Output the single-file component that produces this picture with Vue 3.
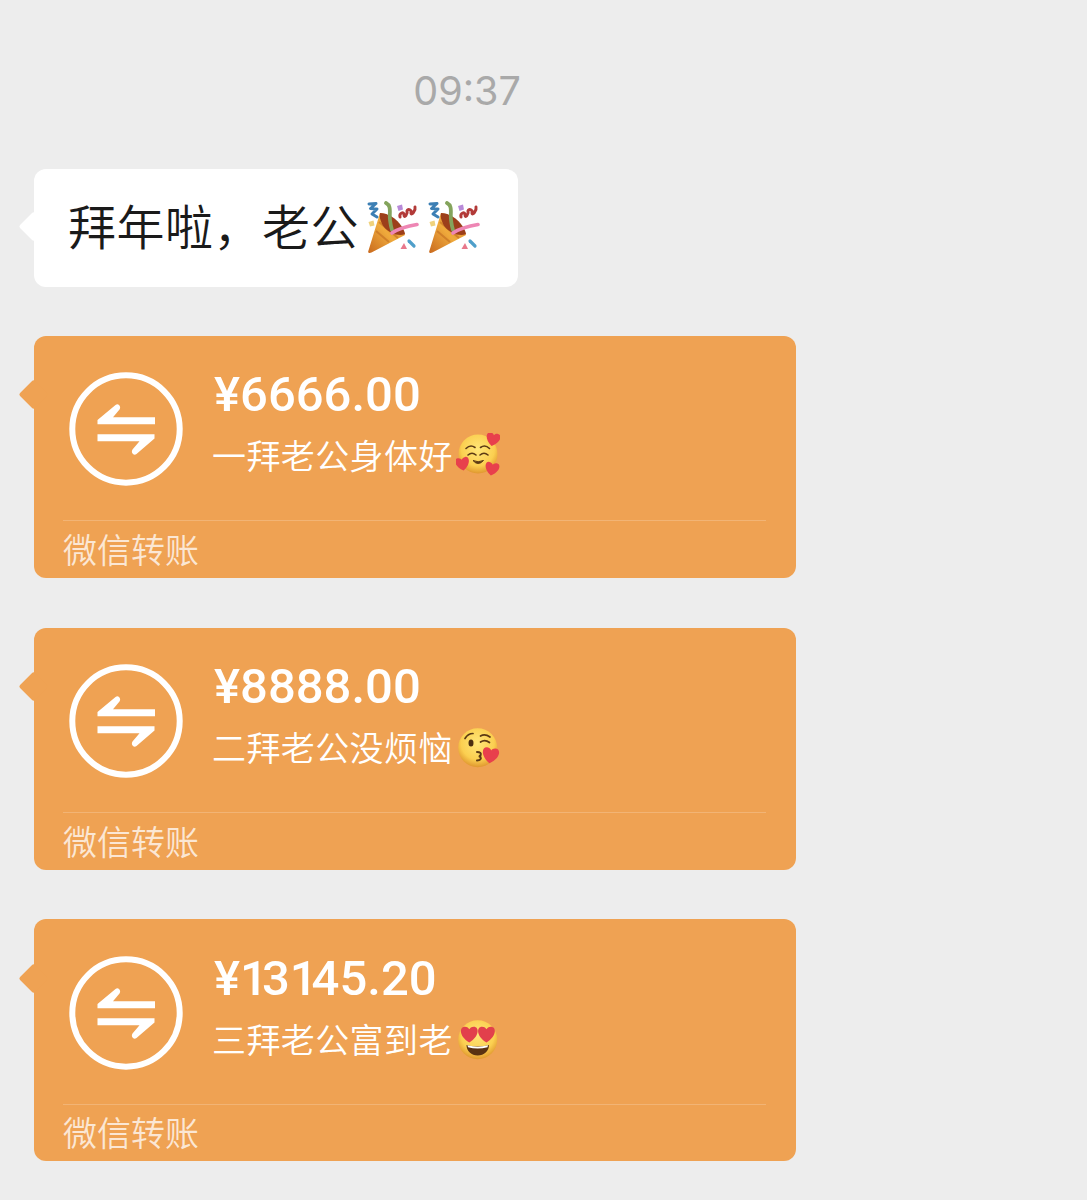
<script setup>
const cards = [
  { amount: '¥6666.00', note: '一拜老公身体好', emoji: 'hearts' },
  { amount: '¥8888.00', note: '二拜老公没烦恼', emoji: 'kiss' },
  { amount: '¥13145.20', note: '三拜老公富到老', emoji: 'love' }
]
const heart = 'M0 4.6C-6.2 .6-5.6-4.5-2.6-4.5C-1.2-4.5-.3-3.7 0-3C.3-3.7 1.2-4.5 2.6-4.5C5.6-4.5 6.2 .6 0 4.6Z'
</script>

<template>
  <main class="page">
    <div class="time">09:37</div>

    <div class="bubble">
      <span class="bubble-text">拜年啦，老公</span>
      <svg v-for="n in 2" :key="n" class="popper" viewBox="0 0 52 52">
        <defs>
          <linearGradient id="cone" x1="0" y1="1" x2="1" y2="0">
            <stop offset="0" stop-color="#c96a1e" />
            <stop offset=".5" stop-color="#efaa3c" />
            <stop offset="1" stop-color="#d9862a" />
          </linearGradient>
        </defs>
        <path d="M1.500 49.500C.5 51.500 2 52.500 4.500 51.500L38 34C36 24 24 13 13 12Z" fill="url(#cone)" />
        <path d="M9 30L22 41M12 21L31 37" stroke="#b9621c" stroke-width="2" fill="none" opacity=".5" />
        <path d="M13 12C24 12 36 23 38 33C32 36 22 32 17 26C14 22 12 16 13 12Z" fill="#9c3f1a" />
        <path d="M19 2C25 5 22 12 23 19C23.500 23 24 26 25 29" stroke="#84a45c" stroke-width="3.800" fill="none" stroke-linecap="round" />
        <path d="M25 32C31 28 40 25 50 23.500" stroke="#ee86b4" stroke-width="3.600" fill="none" stroke-linecap="round" />
        <path d="M2 3L9 2.500L3.500 7.500L10 8L5 13L10 16" stroke="#3c7fb4" stroke-width="3" fill="none" stroke-linejoin="round" stroke-linecap="round" />
        <path d="M33 16C32 12 37 10 37 14C37 18 41 13 40 10C41 7 45 9 44 12C44 15 49 10 48 6" stroke="#b23a38" stroke-width="3" fill="none" stroke-linecap="round" />
        <path d="M30 5L35 3.500L36 8.500L31.500 10Z" fill="#b88ad8" />
        <path d="M1.500 21L6.500 19.500L7.500 24.500L3 25.500Z" fill="#f0d27c" />
        <path d="M42 40L47 45" stroke="#4f9fca" stroke-width="3.200" stroke-linecap="round" />
        <path d="M33.500 48L37 42L40 48Z" fill="#e8788c" />
      </svg>
    </div>

    <section v-for="card in cards" :key="card.amount" class="card">
      <div class="card-main">
        <svg class="transfer" viewBox="0 0 114 114">
          <circle cx="57" cy="57" r="53.700" fill="none" stroke="#fff" stroke-width="6" />
          <path d="M28.500 52.300H86V45.300H44L50.500 37.500Q52 35 50 33Q48.500 31.500 46.500 33L28.500 48Z" fill="#fff" />
          <path d="M85.500 62.300H28.500V69.300H70.500L63.500 77.500Q62 80 64 82Q65.500 83.500 67.500 82L85.500 66.500Z" fill="#fff" />
        </svg>
        <div class="info">
          <div class="amount"><span v-for="(ch, i) in card.amount" :key="i" :class="{ narrow: ch === '1' }">{{ ch }}</span></div>
          <div class="note">
            <span class="note-text">{{ card.note }}</span>
            <svg class="face" viewBox="0 0 44 44">
              <defs>
                <radialGradient :id="'skin-' + card.emoji" cx=".5" cy=".38" r=".65">
                  <stop offset="0" stop-color="#ffe678" />
                  <stop offset=".65" stop-color="#fbcf50" />
                  <stop offset="1" stop-color="#dc8f2a" />
                </radialGradient>
              </defs>
              <template v-if="card.emoji === 'hearts'">
                <circle cx="22" cy="21" r="19.500" :fill="'url(#skin-' + card.emoji + ')'" />
                <g fill="none" stroke="#5c3a14" stroke-width="1.600" stroke-linecap="round">
                  <path d="M10 15.500Q14.500 11 19 14.500" />
                  <path d="M24.500 14.500Q29 11 33.500 15.500" />
                  <path d="M12 22Q16 18.500 20 22" />
                  <path d="M24 22Q28 18.500 32 22" />
                </g>
                <path d="M17 27.500Q22 33.500 27.500 27.500Q22 30 17 27.500Z" fill="#5c3a14" stroke="#5c3a14" stroke-width="1" stroke-linejoin="round" />
                <path :d="heart" fill="#e8404c" transform="translate(37 6.500) rotate(12) scale(1.450)" />
                <path :d="heart" fill="#e8404c" transform="translate(6.500 31) rotate(-10) scale(1.450)" />
                <path :d="heart" fill="#e8404c" transform="translate(36 36) rotate(10) scale(1.450)" />
              </template>
              <template v-else-if="card.emoji === 'kiss'">
                <circle cx="21.700" cy="22.700" r="19.500" :fill="'url(#skin-' + card.emoji + ')'" />
                <g fill="none" stroke="#5c3a14" stroke-width="1.700" stroke-linecap="round" stroke-linejoin="round">
                  <path d="M9 13.500Q12 8.500 17 8.500" />
                  <path d="M24.500 11Q29 8.500 34 12" />
                  <path d="M24.500 17Q29 14 33.500 17.500" />
                  <path d="M21 27Q26 27 24.500 30.500Q22.500 31.500 24.500 32Q26 35 21 35.500" stroke-width="2" />
                </g>
                <ellipse cx="15" cy="18" rx="2.500" ry="3.500" fill="#4a2e10" />
                <path :d="heart" fill="#e8404c" transform="translate(34.500 30.500) rotate(8) scale(1.700)" />
              </template>
              <template v-else>
                <circle cx="21.700" cy="22.700" r="19.500" :fill="'url(#skin-' + card.emoji + ')'" />
                <path d="M10.500 28Q21.700 31 33 28C33 34 28 38.500 21.700 38.500C15.500 38.500 10.500 34 10.500 28Z" fill="#5a3212" />
                <path d="M11.500 28.300Q21.700 31 32 28.300L31.500 30.300Q21.700 32.700 12 30.300Z" fill="#fff" />
                <path :d="heart" fill="#e2404c" transform="translate(13.300 17.500) scale(1.750)" />
                <path :d="heart" fill="#e2404c" transform="translate(30.500 17.500) scale(1.750)" />
              </template>
            </svg>
          </div>
        </div>
      </div>
      <footer class="card-foot">微信转账</footer>
    </section>
  </main>
</template>

<style scoped>
.page {
  box-sizing: border-box;
  width: 1087px;
  height: 1200px;
  padding: 65px 0 0 34px;
  overflow: hidden;
  background: #ededed;
  font-family: "Noto Sans CJK SC", "Noto Sans", sans-serif;
}
.time {
  width: 866px;
  margin-bottom: 52px;
  font-family: Inter, "Liberation Sans", sans-serif;
  font-size: 39.5px;
  line-height: 52px;
  text-align: center;
  color: #a9a9a9;
}
.bubble {
  position: relative;
  display: flex;
  align-items: center;
  gap: 9px;
  box-sizing: border-box;
  width: 484px;
  height: 118px;
  margin-bottom: 49px;
  padding-left: 34px;
  border-radius: 12px;
  background: #fff;
}
.bubble::before,
.card::before {
  content: "";
  position: absolute;
  left: -11.5px;
  top: 47px;
  width: 21px;
  height: 21px;
  border-radius: 2px;
  background: inherit;
  transform: rotate(45deg);
}
.bubble-text {
  font-size: 48px;
  font-weight: 350;
  line-height: 60px;
  letter-spacing: 0.5px;
  color: #1a1a1a;
  margin-right: -1px;
  margin-bottom: 8px;
}
.popper {
  flex: none;
  width: 52px;
  height: 52px;
  margin-bottom: 3px;
}
.card {
  position: relative;
  width: 762px;
  height: 242px;
  margin-bottom: 50px;
  border-radius: 12px;
  background: #efa253;
  color: #fff;
}
.card:last-child {
  margin-top: -1px;
}
.card::before {
  top: 47.5px;
}
.card:last-child::before {
  top: 48.5px;
}
.card-main {
  display: flex;
  gap: 29px;
  box-sizing: border-box;
  height: 184px;
  padding: 36px 0 0 35px;
}
.card:last-child .card-main {
  height: 185px;
  padding-top: 37px;
}
.transfer {
  flex: none;
  width: 114px;
  height: 114px;
}
.amount {
  font-family: Roboto, "Liberation Sans", sans-serif;
  font-size: 49px;
  font-weight: 500;
  line-height: 46px;
  margin-left: 2px;
}
.narrow {
  letter-spacing: -6px;
}
.note {
  display: flex;
  align-items: center;
  height: 46px;
  margin-top: 14px;
}
.note-text {
  font-size: 34px;
  font-weight: 350;
  line-height: 46px;
  letter-spacing: 0.4px;
}
.face {
  flex: none;
  width: 44px;
  height: 44px;
  margin-left: 3px;
}
.card-foot {
  margin: 0 30px 0 29px;
  border-top: 1px solid rgba(255, 255, 255, 0.2);
  font-size: 34px;
  font-weight: 350;
  line-height: 55px;
  color: rgba(255, 255, 255, 0.75);
}
.card:last-child .card-foot {
  line-height: 54px;
}
</style>
